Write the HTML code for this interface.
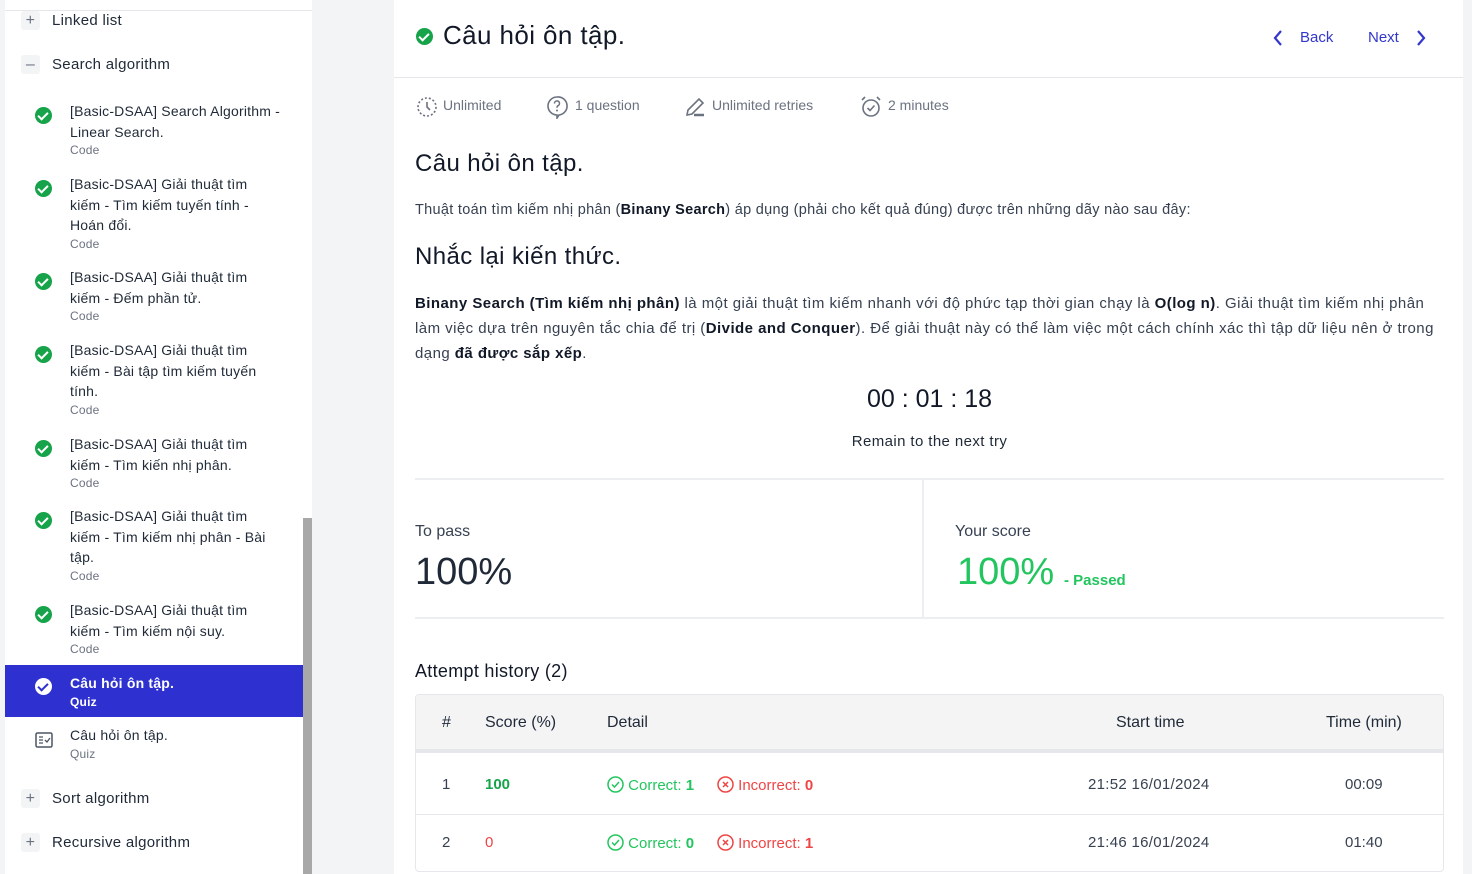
<!DOCTYPE html>
<html><head><meta charset="utf-8"><style>
*{margin:0;padding:0;box-sizing:border-box}
body{width:1472px;height:874px;overflow:hidden;background:#f3f4f6;font-family:"Liberation Sans",sans-serif;color:#1f2937;position:relative}
.abs{position:absolute}
#side{left:5px;top:0;width:307px;height:874px;background:#fff}
.sec{position:absolute;left:0;font-size:15px;color:#1f2937;letter-spacing:0.3px}
.sec .b{position:absolute;left:16px;top:-2px;width:19px;height:19px;background:#f3f4f6;border-radius:3px;color:#6b7280;font-size:16px;line-height:19px;text-align:center}
.sec span.t{position:absolute;left:47px;white-space:nowrap;top:-1px}
.it{position:absolute;left:0;width:298px;font-size:14px;line-height:20.5px;color:#1f2937}
.it .tx{position:absolute;left:65px;width:215px;letter-spacing:0.2px}
.it .sub{font-size:12px;color:#6b7280;line-height:16px}
.ck{position:absolute;left:30px;width:17px;height:17px;border-radius:50%;background:#16a34a}
.ck:after{content:"";position:absolute;left:5px;top:3px;width:4px;height:8px;border:solid #fff;border-width:0 2.2px 2.2px 0;transform:rotate(45deg)}
#main{left:394px;top:0;width:1069px;height:874px;background:#fff}
.meta{position:absolute;top:97px;font-size:14px;color:#6b7280}
</style></head><body>
<div id="side" class="abs">
 <div class="abs" style="left:0;top:10px;width:307px;height:1px;background:#e5e7eb"></div>
 <div class="sec" style="top:13px"><div class="b">+</div><span class="t">Linked list</span></div>
 <div class="sec" style="top:57px"><div class="b">–</div><span class="t">Search algorithm</span></div>

 <div class="it" style="top:101px"><div class="ck" style="top:6px"></div><div class="tx">[Basic-DSAA] Search Algorithm - Linear Search.<div class="sub">Code</div></div></div>
 <div class="it" style="top:174px"><div class="ck" style="top:6px"></div><div class="tx" style="width:195px">[Basic-DSAA] Giải thuật tìm kiếm - Tìm kiếm tuyến tính - Hoán đổi.<div class="sub">Code</div></div></div>
 <div class="it" style="top:267px"><div class="ck" style="top:6px"></div><div class="tx" style="width:195px">[Basic-DSAA] Giải thuật tìm kiếm - Đếm phần tử.<div class="sub">Code</div></div></div>
 <div class="it" style="top:340px"><div class="ck" style="top:6px"></div><div class="tx" style="width:200px">[Basic-DSAA] Giải thuật tìm kiếm - Bài tập tìm kiếm tuyến tính.<div class="sub">Code</div></div></div>
 <div class="it" style="top:434px"><div class="ck" style="top:6px"></div><div class="tx" style="width:195px">[Basic-DSAA] Giải thuật tìm kiếm - Tìm kiến nhị phân.<div class="sub">Code</div></div></div>
 <div class="it" style="top:506px"><div class="ck" style="top:6px"></div><div class="tx" style="width:210px">[Basic-DSAA] Giải thuật tìm kiếm - Tìm kiếm nhị phân - Bài tập.<div class="sub">Code</div></div></div>
 <div class="it" style="top:600px"><div class="ck" style="top:6px"></div><div class="tx" style="width:195px">[Basic-DSAA] Giải thuật tìm kiếm - Tìm kiếm nội suy.<div class="sub">Code</div></div></div>

 <div class="it" style="top:665px;height:52px;background:#2e31cf;color:#fff"><div class="ck wk" style="top:13px;background:#fff"></div><div class="tx" style="top:8px;font-weight:bold">Câu hỏi ôn tập.<div class="sub" style="color:#fff;font-weight:bold">Quiz</div></div></div>
 <style>.wk:after{border-color:#2e31cf}</style>
 <div class="it" style="top:725px"><svg class="abs" style="left:30px;top:7px" width="18" height="16" viewBox="0 0 18 16"><rect x="1" y="1" width="16" height="14" rx="1.5" fill="none" stroke="#4b5563" stroke-width="1.5"/><path d="M4 5h4M4 8h4M4 11h4M10 8l2 2 3-4" stroke="#4b5563" stroke-width="1.3" fill="none"/></svg><div class="tx">Câu hỏi ôn tập.<div class="sub">Quiz</div></div></div>

 <div class="sec" style="top:791px"><div class="b">+</div><span class="t">Sort algorithm</span></div>
 <div class="sec" style="top:835px"><div class="b">+</div><span class="t">Recursive algorithm</span></div>
 <div class="abs" style="left:298px;top:518px;width:9px;height:356px;background:#a8a8a8"></div>
</div>

<div id="main" class="abs">
 <div class="ck" style="left:22px;top:28px;width:17px;height:17px"></div>
 <div class="abs" style="left:49px;top:20px;font-size:26px;color:#111827;letter-spacing:0.4px">Câu hỏi ôn tập.</div>
 <svg class="abs" style="left:878px;top:29px" width="12" height="18"><path d="M9 2L3 9l6 7" stroke="#3337cc" stroke-width="2.2" fill="none"/></svg>
 <div class="abs" style="left:906px;top:29px;font-size:15px;color:#3337cc">Back</div>
 <div class="abs" style="left:974px;top:29px;font-size:15px;color:#3337cc">Next</div>
 <svg class="abs" style="left:1021px;top:29px" width="12" height="18"><path d="M3 2l6 7-6 7" stroke="#3337cc" stroke-width="2.2" fill="none"/></svg>
 <div class="abs" style="left:0;top:77px;width:1069px;height:1px;background:#e5e7eb"></div>

 <svg class="abs" style="left:22px;top:96px" width="22" height="22"><circle cx="11" cy="11" r="9" stroke="#6b7280" stroke-width="1.6" fill="none" stroke-dasharray="2 2"/><path d="M11 6v5l3 3" stroke="#6b7280" stroke-width="1.6" fill="none"/></svg>
 <div class="meta" style="left:49px">Unlimited</div>
 <svg class="abs" style="left:152px;top:95px" width="22" height="24"><path d="M11 2a9 9 0 1 0 0 18v3l2-3a9 9 0 0 0-2-18z" stroke="#6b7280" stroke-width="1.6" fill="none"/><path d="M8.5 8.5a2.5 2.5 0 1 1 3.5 2.2c-.8.4-1 1-1 2" stroke="#6b7280" stroke-width="1.5" fill="none"/><circle cx="11" cy="15.5" r="1" fill="#6b7280"/></svg>
 <div class="meta" style="left:181px">1 question</div>
 <svg class="abs" style="left:290px;top:96px" width="22" height="22"><path d="M3 19l1-5L15 3l4 4L8 18z" stroke="#6b7280" stroke-width="1.6" fill="none"/><path d="M10 19h10" stroke="#6b7280" stroke-width="2.5"/></svg>
 <div class="meta" style="left:318px">Unlimited retries</div>
 <svg class="abs" style="left:466px;top:95px" width="22" height="24"><circle cx="11" cy="13" r="8" stroke="#6b7280" stroke-width="1.6" fill="none"/><path d="M7.5 13l2.5 2.5 4.5-5M2 5l3-3M20 5l-3-3" stroke="#6b7280" stroke-width="1.6" fill="none"/></svg>
 <div class="meta" style="left:494px">2 minutes</div>

 <div class="abs" style="left:21px;top:150px;font-size:24px;color:#111827;letter-spacing:0.4px">Câu hỏi ôn tập.</div>
 <div class="abs" style="left:21px;top:202px;font-size:14.5px;color:#374151;letter-spacing:0.3px">Thuật toán tìm kiếm nhị phân (<b style="color:#111827">Binany Search</b>) áp dụng (phải cho kết quả đúng) được trên những dãy nào sau đây:</div>
 <div class="abs" style="left:21px;top:243px;font-size:24px;color:#111827;letter-spacing:0.4px">Nhắc lại kiến thức.</div>
 <div class="abs" style="left:21px;top:291px;width:1032px;font-size:15px;line-height:25px;color:#374151;letter-spacing:0.45px"><b style="color:#111827">Binany Search (Tìm kiếm nhị phân)</b> là một giải thuật tìm kiếm nhanh với độ phức tạp thời gian chạy là <b style="color:#111827">O(log n)</b>. Giải thuật tìm kiếm nhị phân làm việc dựa trên nguyên tắc chia để trị (<b style="color:#111827">Divide and Conquer</b>). Để giải thuật này có thể làm việc một cách chính xác thì tập dữ liệu nên ở trong dạng <b style="color:#111827">đã được sắp xếp</b>.</div>
 <div class="abs" style="left:21px;width:1029px;top:385px;text-align:center;font-size:25px;color:#111827">00 : 01 : 18</div>
 <div class="abs" style="left:21px;width:1029px;top:433px;text-align:center;font-size:15px;color:#1f2937;letter-spacing:0.4px">Remain to the next try</div>
 <div class="abs" style="left:21px;top:478px;width:1029px;height:2px;background:#eceef1"></div>
 <div class="abs" style="left:528px;top:480px;width:2px;height:138px;background:#eceef1"></div>
 <div class="abs" style="left:21px;top:617px;width:1029px;height:2px;background:#eceef1"></div>
 <div class="abs" style="left:21px;top:523px;font-size:16px;color:#374151">To pass</div>
 <div class="abs" style="left:21px;top:551px;font-size:38px;color:#1f2937">100%</div>
 <div class="abs" style="left:561px;top:523px;font-size:16px;color:#374151">Your score</div>
 <div class="abs" style="left:563px;top:551px;font-size:38px;color:#22c55e">100%</div>
 <div class="abs" style="left:670px;top:572px;font-size:15px;color:#22c55e;font-weight:bold">- Passed</div>

 <div class="abs" style="left:21px;top:661px;font-size:18px;color:#111827;letter-spacing:0.3px">Attempt history (2)</div>
 <div class="abs" style="left:21px;top:694px;width:1029px;height:178px;border:1px solid #e5e7eb;border-radius:4px;overflow:hidden">
  <div class="abs" style="left:0;top:0;width:1029px;height:58px;background:#f4f4f5;border-bottom:4px solid #e5e7eb"></div>
  <div class="abs" style="left:0;top:119px;width:1029px;height:1px;background:#e5e7eb"></div>
  <div class="abs" style="top:19px;left:26px;font-size:16px">#</div>
  <div class="abs" style="top:19px;left:69px;font-size:16px">Score (%)</div>
  <div class="abs" style="top:19px;left:191px;font-size:16px">Detail</div>
  <div class="abs" style="top:19px;left:700px;font-size:16px">Start time</div>
  <div class="abs" style="top:19px;left:910px;font-size:16px">Time (min)</div>

  <div class="abs" style="top:81px;left:26px;font-size:15px;color:#374151">1</div>
  <div class="abs" style="top:81px;left:69px;font-size:15px;color:#16a34a;font-weight:bold">100</div>
  <div class="abs" style="top:81px;left:191px;font-size:15px;color:#22c55e"><svg width="17" height="17" style="vertical-align:-3px"><circle cx="8.5" cy="8.5" r="7.5" stroke="#22c55e" stroke-width="1.5" fill="none"/><path d="M5 8.5l2.5 2.5 4.5-5" stroke="#22c55e" stroke-width="1.5" fill="none"/></svg> Correct: <b>1</b></div>
  <div class="abs" style="top:81px;left:301px;font-size:15px;color:#ef4444"><svg width="17" height="17" style="vertical-align:-3px"><circle cx="8.5" cy="8.5" r="7.5" stroke="#ef4444" stroke-width="1.5" fill="none"/><path d="M6 6l5 5M11 6l-5 5" stroke="#ef4444" stroke-width="1.5"/></svg> Incorrect: <b>0</b></div>
  <div class="abs" style="top:81px;left:672px;font-size:15px;color:#374151;letter-spacing:0.3px">21:52 16/01/2024</div>
  <div class="abs" style="top:81px;left:929px;font-size:15px;color:#374151">00:09</div>

  <div class="abs" style="top:139px;left:26px;font-size:15px;color:#374151">2</div>
  <div class="abs" style="top:139px;left:69px;font-size:15px;color:#ef4444">0</div>
  <div class="abs" style="top:139px;left:191px;font-size:15px;color:#22c55e"><svg width="17" height="17" style="vertical-align:-3px"><circle cx="8.5" cy="8.5" r="7.5" stroke="#22c55e" stroke-width="1.5" fill="none"/><path d="M5 8.5l2.5 2.5 4.5-5" stroke="#22c55e" stroke-width="1.5" fill="none"/></svg> Correct: <b>0</b></div>
  <div class="abs" style="top:139px;left:301px;font-size:15px;color:#ef4444"><svg width="17" height="17" style="vertical-align:-3px"><circle cx="8.5" cy="8.5" r="7.5" stroke="#ef4444" stroke-width="1.5" fill="none"/><path d="M6 6l5 5M11 6l-5 5" stroke="#ef4444" stroke-width="1.5"/></svg> Incorrect: <b>1</b></div>
  <div class="abs" style="top:139px;left:672px;font-size:15px;color:#374151;letter-spacing:0.3px">21:46 16/01/2024</div>
  <div class="abs" style="top:139px;left:929px;font-size:15px;color:#374151">01:40</div>
 </div>
</div>
</body></html>
